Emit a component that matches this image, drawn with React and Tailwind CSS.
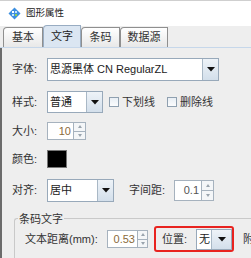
import React from 'react'

const Arrow = () => (
    <svg width="8" height="5" viewBox="0 0 8 5">
        <path d="M0 0h8L4 4.5z" fill="#111" />
    </svg>
)

const Combo = ({ value, fieldW, h = 'h-[22px]', btnW = 'w-[16px]' }) => (
    <div className={`flex shrink-0 ${h} border border-[#98a9ba] bg-white`}>
        <div className={`${fieldW} flex items-center pl-[2px] text-[#222] whitespace-nowrap overflow-hidden`}>{value}</div>
        <div className={`${btnW} flex items-center justify-center border-l border-[#a9b8c6] bg-gradient-to-b from-[#eef3f8] to-[#d3dfeb]`}>
            <Arrow />
        </div>
    </div>
)

const Spinner = ({ value, fieldW, h = 'h-[18px]', btnW = 'w-[12px]', color = 'text-[#8a6a3a]' }) => (
    <div className={`flex shrink-0 ${h}`}>
        <div className={`${fieldW} border border-[#a6b2be] bg-white flex items-center justify-end pr-[2px] ${color}`}>{value}</div>
        <div className={`${btnW} flex flex-col border border-l-0 border-[#a6b2be]`}>
            <div className="flex-1 flex items-center justify-center bg-[#f4f6f8] border-b border-[#a6b2be]">
                <svg width="4" height="3" viewBox="0 0 4 3"><path d="M0 3h4L2 0z" fill="#9aa4ae" /></svg>
            </div>
            <div className="flex-1 flex items-center justify-center bg-[#f4f6f8]">
                <svg width="4" height="3" viewBox="0 0 4 3"><path d="M0 0h4L2 3z" fill="#9aa4ae" /></svg>
            </div>
        </div>
    </div>
)

const Check = ({ label }) => (
    <div className="flex items-center gap-[3px]">
        <div className="w-[10px] h-[10px] border border-[#8fa0b0] bg-gradient-to-b from-[#e8eef4] to-[#fbfcfd]"></div>
        <span>{label}</span>
    </div>
)

const Tab = ({ label, active, w }) => (
    <div
        className={`${w} flex items-center justify-center border border-b-0 rounded-tl-[4px] ${
            active
                ? 'h-[22px] bg-[#dbe6f2] border-[#98acc2] text-[#222]'
                : 'h-[20px] bg-gradient-to-b from-[#ffffff] to-[#e8e8e8] border-[#8f8f8f] text-[#333]'
        }`}
    >
        {label}
    </div>
)

export default function App() {
    return (
        <div
            className="w-[251px] h-[258px] overflow-hidden bg-[#eeeeee] text-[11px] text-[#333]"
            style={{ fontFamily: '"Liberation Sans", "Noto Sans CJK SC", sans-serif' }}
        >
            {/* title bar */}
            <div className="h-[26px] bg-white flex items-center pl-[8px] border-t border-[#cfcfcf]">
                <svg width="13" height="13" viewBox="0 0 13 13">
                    <path d="M6.5 0.5L12.5 6.5L6.5 12.5L0.5 6.5z" fill="#3d8fe0" />
                    <rect x="4" y="4" width="2" height="2" fill="#fff" />
                    <rect x="7" y="4" width="2" height="2" fill="#bfe3ff" />
                    <rect x="4" y="7" width="2" height="2" fill="#bfe3ff" />
                    <rect x="7" y="7" width="2" height="2" fill="#8fd14f" />
                </svg>
                <span className="ml-[5px] text-[9.5px] text-[#222]">图形属性</span>
            </div>

            {/* tabs */}
            <div className="flex items-end h-[22px] pl-[3px] border-b border-[#c6d7ea]">
                <Tab label="基本" w="w-[40px]" />
                <Tab label="文字" w="w-[38px]" active />
                <Tab label="条码" w="w-[39px]" />
                <Tab label="数据源" w="w-[48px]" />
            </div>

            {/* content */}
            <div className="h-[210px] border-l-2 border-[#6b6b6b] pl-[10px] pt-[10px]">
                <div className="flex items-center">
                    <span className="w-[35px]">字体:</span>
                    <Combo value="思源黑体 CN RegularZL" fieldW="w-[154px]" h="h-[23px]" />
                </div>

                <div className="flex items-center mt-[10px]">
                    <span className="w-[35px]">样式:</span>
                    <Combo value="普通" fieldW="w-[38px]" />
                    <div className="ml-[6px]">
                        <Check label="下划线" />
                    </div>
                    <div className="ml-[12px]">
                        <Check label="删除线" />
                    </div>
                </div>

                <div className="flex items-center mt-[9px]">
                    <span className="w-[35px]">大小:</span>
                    <Spinner value="10" fieldW="w-[27px]" />
                </div>

                <div className="flex items-center mt-[10px]">
                    <span className="w-[35px]">颜色:</span>
                    <div className="w-[20px] h-[18px] bg-black border border-[#777]"></div>
                </div>

                <div className="flex items-center mt-[11px]">
                    <span className="w-[35px]">对齐:</span>
                    <Combo value="居中" fieldW="w-[49px]" h="h-[23px]" />
                    <span className="ml-[15px] w-[45px]">字间距:</span>
                    <Spinner value="0.1" fieldW="w-[28px]" h="h-[21px]" color="text-[#555]" />
                </div>

                {/* group */}
                <div className="relative mt-[16px] ml-[2px] h-[60px] border-t border-l border-[#c9c9c9] rounded-tl-[3px]">
                    <span className="absolute -top-[6px] left-[3px] bg-[#eeeeee] px-[1px] leading-[12px]">条码文字</span>
                    <div className="flex items-center mt-[7px] ml-[10px] whitespace-nowrap">
                        <span className="w-[82px] shrink-0">文本距离(mm):</span>
                        <Spinner value="0.53" fieldW="w-[31px]" btnW="w-[10px]" />
                        <div className="ml-[6px] flex items-center h-[26px] w-[80px] shrink-0 border-2 border-[#e8231f] rounded-[3px] pl-[6px]">
                            <span className="w-[34px] shrink-0">位置:</span>
                            <Combo value="无" fieldW="w-[14px]" h="h-[21px]" btnW="w-[20px]" />
                        </div>
                        <span className="ml-[9px] shrink-0">附加</span>
                    </div>
                </div>
            </div>
        </div>
    )
}
